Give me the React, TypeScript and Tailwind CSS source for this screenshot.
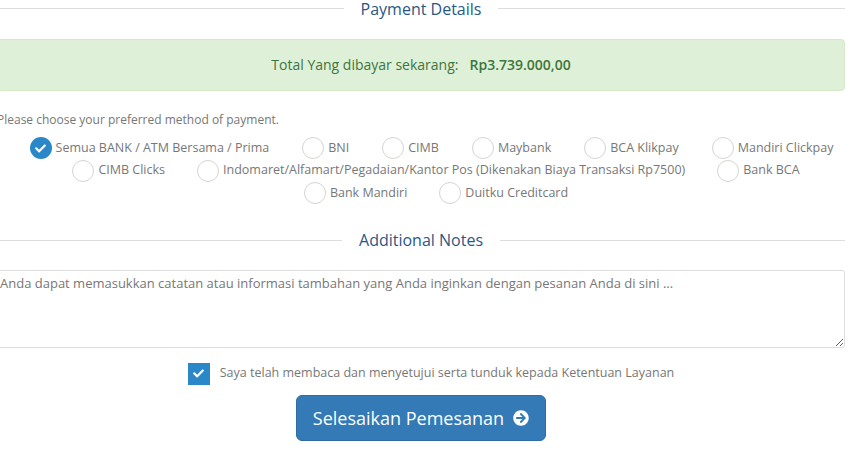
import { FaArrowCircleRight, FaCheck } from 'react-icons/fa';

const rows = [
  {
    className: 'gap-[33px] pl-[21px]',
    items: ['Semua BANK / ATM Bersama / Prima', 'BNI', 'CIMB', 'Maybank', 'BCA Klikpay', 'Mandiri Clickpay'],
  },
  {
    className: 'gap-[32px] pl-[30px]',
    items: ['CIMB Clicks', 'Indomaret/Alfamart/Pegadaian/Kantor Pos (Dikenakan Biaya Transaksi Rp7500)', 'Bank BCA'],
  },
  {
    className: 'gap-[32px] pl-[30px]',
    items: ['Bank Mandiri', 'Duitku Creditcard'],
  },
];

function Heading({ title }: { title: string }) {
  return (
    <div className="flex h-[17px] items-center gap-4">
      <div className="h-px flex-1 bg-[#dddddd]" />
      <span className="px-px pt-px text-base leading-[17px] text-[#2a5885]">{title}</span>
      <div className="h-px flex-1 bg-[#dddddd]" />
    </div>
  );
}

function Radio({ label, checked }: { label: string; checked: boolean }) {
  return (
    <label className="flex h-[22.5px] items-center gap-1 whitespace-nowrap">
      {checked ? (
        <span className="flex h-[22px] w-[22px] items-center justify-center rounded-full bg-[#2a88c8] text-white">
          <FaCheck className="h-[11px] w-[11px]" />
        </span>
      ) : (
        <span className="h-[22px] w-[22px] rounded-full border border-[#d8d4cf] bg-white" />
      )}
      <span>{label}</span>
    </label>
  );
}

export default function App() {
  return (
    <div className="h-[454px] w-[850px] overflow-hidden bg-white font-['Open_Sans',sans-serif] text-[12.5px] text-[#777777]">
      <div className="-ml-[3px] w-[848px]">
        <Heading title="Payment Details" />

        <div className="mt-[22px] flex h-[52px] items-center justify-center gap-[11px] rounded border border-[#d6e9c6] bg-[#dff0d8] text-sm text-[#3c763d]">
          <span>Total Yang dibayar sekarang:</span>
          <b className="font-semibold">Rp3.739.000,00</b>
        </div>

        <p className="mt-[20px] text-xs leading-[17px]">Please choose your preferred method of payment.</p>

        <div className="mt-[9px]">
          {rows.map((row, i) => (
            <div key={i} className={`flex justify-center ${row.className}`}>
              {row.items.map((item) => (
                <Radio key={item} label={item} checked={item.startsWith('Semua')} />
              ))}
            </div>
          ))}
        </div>

        <div className="mt-[27px]">
          <Heading title="Additional Notes" />
        </div>

        <textarea
          className="mt-[21px] block h-[78px] w-full rounded-[3px] border border-[#dddddd] px-[2px] py-[4px] text-[13px] leading-[17px] outline-none placeholder:text-[#777777]"
          placeholder="Anda dapat memasukkan catatan atau informasi tambahan yang Anda inginkan dengan pesanan Anda di sini ..."
        />

        <div className="mt-[15px] flex items-center justify-center gap-[10px] pl-[20px]">
          <span className="flex h-[22px] w-[22px] items-center justify-center bg-[#2a88c8] text-white">
            <FaCheck className="h-[11px] w-[11px]" />
          </span>
          <span>Saya telah membaca dan menyetujui serta tunduk kepada Ketentuan Layanan</span>
        </div>

        <div className="mt-[10px] flex justify-center">
          <button className="flex h-[46px] w-[250px] items-center justify-center gap-[9px] rounded-md border border-[#2e6da4] bg-[#337ab7] text-lg text-white">
            Selesaikan Pemesanan
            <FaArrowCircleRight className="h-4 w-4" />
          </button>
        </div>
      </div>
    </div>
  );
}
